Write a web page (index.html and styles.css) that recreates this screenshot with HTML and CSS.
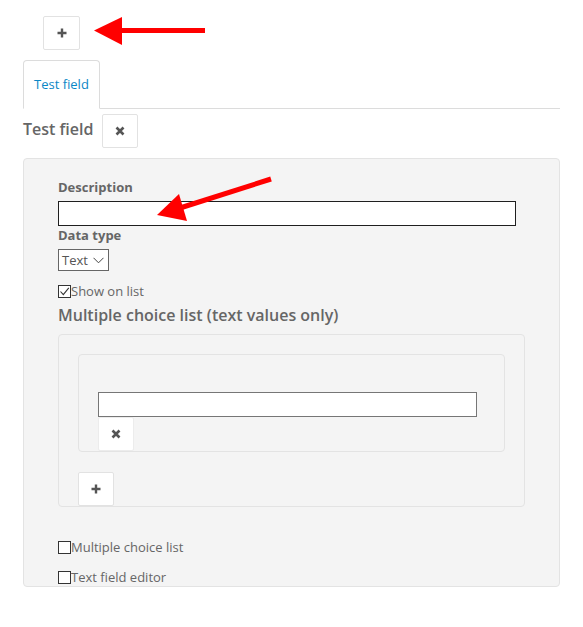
FILE: index.html
```html
<!DOCTYPE html>
<html>
<head>
<meta charset="utf-8">
<link rel="stylesheet" href="styles.css">
</head>
<body>
<div class="page">
  <div class="toolbar">
    <button class="btn" type="button" aria-label="Add">
      <svg width="10" height="10" viewBox="0 0 10 10"><path d="M5 0.5V9.5M0.5 5H9.5" stroke="#555" stroke-width="2.4"/></svg>
    </button>
  </div>
  <div class="tabs">
    <div class="tab">Test field</div>
  </div>
  <div class="field-head">
    <h2 class="field-title">Test field</h2>
    <button class="btn" type="button" aria-label="Remove">
      <svg width="10" height="10" viewBox="0 0 10 10"><path d="M1.5 1.5L8.5 8.5M8.5 1.5L1.5 8.5" stroke="#555" stroke-width="2.6"/></svg>
    </button>
  </div>
  <div class="panel">
    <label class="lbl">Description</label>
    <div class="input dark"></div>
    <label class="lbl">Data type</label>
    <div class="select">Text
      <svg width="11" height="7" viewBox="0 0 11 7"><path d="M0.5 0.8L5.5 5.8L10.5 0.8" fill="none" stroke="#444" stroke-width="1"/></svg>
    </div>
    <div class="check-row first">
      <span class="cb"><svg width="11" height="11" viewBox="0 0 11 11"><path d="M1.5 5.5L4.3 8.6L9.8 1.8" fill="none" stroke="#333" stroke-width="1.1"/></svg></span>Show on list
    </div>
    <h3 class="sub-title">Multiple choice list (text values only)</h3>
    <div class="box outer">
      <div class="box inner">
        <div class="spacer"></div>
        <div class="input light"></div>
        <button class="btn" type="button" aria-label="Remove">
          <svg width="10" height="10" viewBox="0 0 10 10"><path d="M1.5 1.5L8.5 8.5M8.5 1.5L1.5 8.5" stroke="#555" stroke-width="2.6"/></svg>
        </button>
      </div>
      <button class="btn add" type="button" aria-label="Add">
        <svg width="10" height="10" viewBox="0 0 10 10"><path d="M5 0.5V9.5M0.5 5H9.5" stroke="#555" stroke-width="2.4"/></svg>
      </button>
    </div>
    <div class="check-row mc"><span class="cb"></span>Multiple choice list</div>
    <div class="check-row tf"><span class="cb"></span>Text field editor</div>
  </div>
</div>
<svg class="arrows" width="583" height="627" viewBox="0 0 583 627">
  <line x1="118" y1="30.5" x2="205" y2="30.5" stroke="#ff0000" stroke-width="5"/>
  <polygon points="94,30.5 122,17 122,45" fill="#ff0000"/>
  <line x1="180" y1="208" x2="271" y2="179" stroke="#ff0000" stroke-width="5"/>
  <polygon points="157,215 179,194 187,221" fill="#ff0000"/>
</svg>
</body>
</html>
```

FILE: styles.css
```css
* { box-sizing: border-box; }
html, body { margin: 0; padding: 0; background: #fff; }
body {
  font-family: "Open Sans", "Liberation Sans", sans-serif;
  font-size: 13px;
  color: #666;
  position: relative;
  width: 583px;
  height: 627px;
  overflow: hidden;
}
.page { padding: 16px 23px 0 23px; width: 583px; }
.toolbar { padding-left: 20px; height: 34px; }
.btn {
  display: flex;
  align-items: center;
  justify-content: center;
  width: 36px;
  height: 34px;
  padding: 0;
  margin: 0;
  background: #fff;
  border: 1px solid #e2e2e2;
  border-radius: 2px;
}
.toolbar .btn { width: 37px; }
.tabs {
  margin-top: 10px;
  border-bottom: 1px solid #dcdcdc;
  width: 537px;
  display: flex;
}
.tab {
  margin-bottom: -1px;
  border: 1px solid #dcdcdc;
  border-bottom-color: #fff;
  border-radius: 4px 4px 0 0;
  padding: 14px 10px 15px;
  line-height: 18px;
  color: #0a87c6;
  background: #fff;
}
.field-head {
  display: flex;
  align-items: center;
  margin-top: 5px;
}
.field-title {
  margin: 0 9px 0 0;
  font-size: 16px;
  font-weight: 600;
  color: #666;
  line-height: 24px;
  position: relative;
  top: -2px;
}
.panel {
  margin-top: 10px;
  width: 537px;
  height: 429px;
  background: #f4f4f4;
  border: 1px solid #e3e3e3;
  border-radius: 4px;
  padding: 19px 34px 0 34px;
}
.lbl {
  display: block;
  font-weight: 700;
  font-size: 13px;
  line-height: 18px;
  margin-bottom: 5px;
  color: #666;
}
.input {
  width: 98%;
  height: 25px;
  background: #fff;
  border: 1px solid #767676;
}
.input.dark { border-color: #1f1f1f; }
.select {
  display: flex;
  align-items: center;
  gap: 5px;
  width: 51px;
  height: 22px;
  border: 1px solid #666;
  padding: 0 0 0 3px;
  color: #555;
  font-size: 13px;
  background: #fff;
}
.check-row {
  display: flex;
  align-items: center;
  line-height: 18px;
  height: 18px;
  color: #666;
}
.check-row.first { margin-top: 11px; }
.cb {
  width: 13px;
  height: 13px;
  border: 1px solid #333;
  background: #fff;
  display: flex;
  align-items: center;
  justify-content: center;
  margin-right: 0;
}
.sub-title {
  margin: 4px 0 0;
  font-size: 16px;
  font-weight: 600;
  line-height: 22px;
  color: #666;
}
.box {
  border: 1px solid #e3e3e3;
  border-radius: 4px;
  background: #f4f4f4;
}
.outer {
  margin-top: 8px;
  padding: 19px 19px 0 19px;
}
.inner {
  padding: 19px 19px 0 19px;
}
.spacer { height: 18px; }
.inner .btn { border-color: #ececec; height: 34px; }
.add { margin-top: 20px; }
.check-row.mc { margin-top: 31px; }
.check-row.tf { margin-top: 12px; }
.arrows {
  position: absolute;
  left: 0;
  top: 0;
  pointer-events: none;
}
```
